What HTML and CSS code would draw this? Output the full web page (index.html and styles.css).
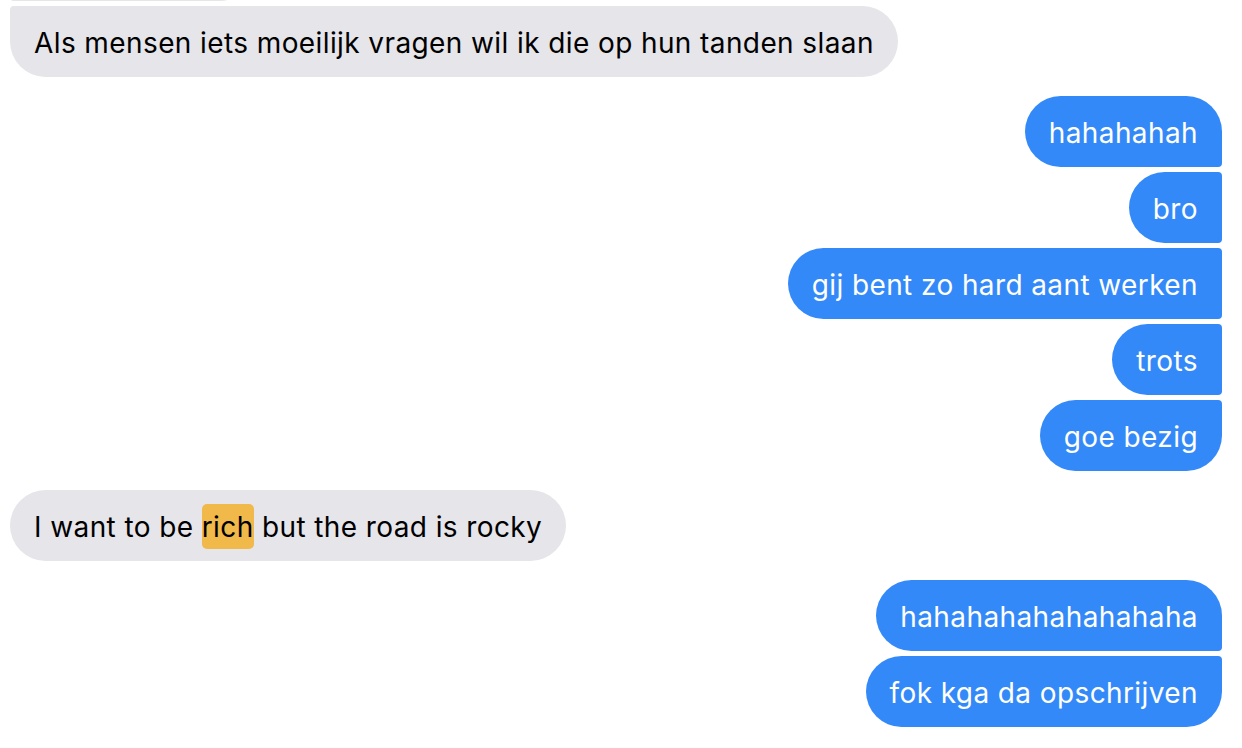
FILE: index.html
```html
<!DOCTYPE html>
<html>

<head>
    <meta charset="utf-8" />
    <title>Chat</title>
    <link rel="stylesheet" href="styles.css">
</head>

<body>
    <div id="thread">
        <div class="group theirs">
            <div class="bubble stub"></div>
            <div class="bubble">Als mensen iets moeilijk vragen wil ik die op hun tanden slaan</div>
        </div>
        <div class="group mine">
            <div class="bubble">hahahahah</div>
            <div class="bubble">bro</div>
            <div class="bubble">gij bent zo hard aant werken</div>
            <div class="bubble">trots</div>
            <div class="bubble">goe bezig</div>
        </div>
        <div class="group theirs">
            <div class="bubble">I want to be <span class="hit">rich</span> but the road is rocky</div>
        </div>
        <div class="group mine">
            <div class="bubble">hahahahahahahahaha</div>
            <div class="bubble">fok kga da opschrijven</div>
        </div>
    </div>
</body>

</html>
```

FILE: styles.css
```css
html {
    margin: 0px;
    padding: 0px;
}

body {
    font-family: 'Inter', 'Helvetica', 'Arial', sans-serif;
    margin: 0px;
    padding: 0px;
    background-color: #ffffff;
    color: #000000;
    overflow: hidden;
}

#thread {
    display: flex;
    flex-direction: column;
    gap: 19px;
    margin-top: -70px;
    padding: 0px 20px 0px 10px;
}

.group {
    display: flex;
    flex-direction: column;
    gap: 5px;
}

.bubble {
    font-size: 28px;
    line-height: 31px;
    letter-spacing: 0.4px;
    padding: 22px 24px 18px 24px;
    border-radius: 36px;
}

.stub {
    width: 197px;
    height: 31px;
}

.theirs {
    align-items: flex-start;
}

.theirs .bubble {
    background-color: #e5e5ea;
    color: #000000;
    border-top-left-radius: 4px;
    border-bottom-left-radius: 4px;
}

.theirs .bubble:first-child {
    border-top-left-radius: 36px;
}

.theirs .bubble:last-child {
    border-bottom-left-radius: 36px;
}

.mine {
    align-items: flex-end;
}

.mine .bubble {
    background-color: #3489f8;
    color: #ffffff;
    border-top-right-radius: 4px;
    border-bottom-right-radius: 4px;
}

.mine .bubble:first-child {
    border-top-right-radius: 36px;
}

.mine .bubble:last-child {
    border-bottom-right-radius: 36px;
}

.hit {
    background-color: #f1b94a;
    border-radius: 5px;
    padding: 6px 0px 5px 0px;
}
```
